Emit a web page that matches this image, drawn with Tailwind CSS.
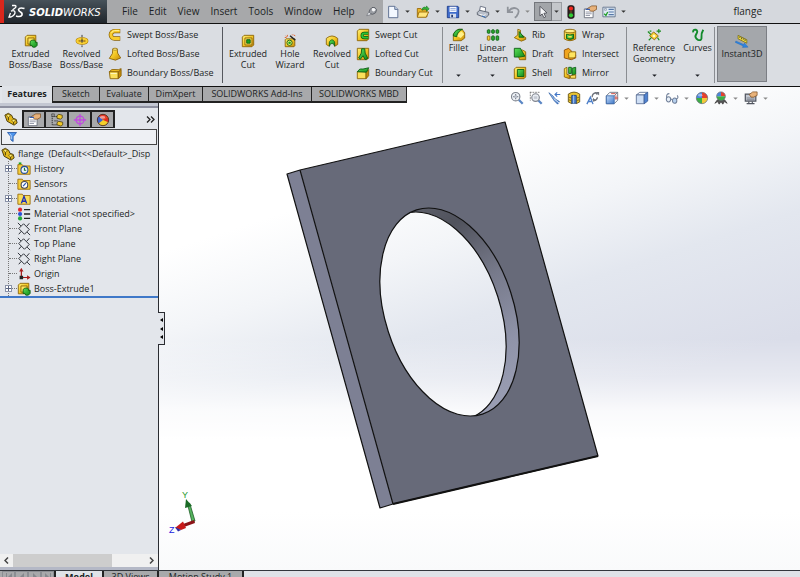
<!DOCTYPE html>
<html lang="en">
<head>
<meta charset="utf-8">
<meta name="viewport" content="width=device-width, initial-scale=1">
<title>SOLIDWORKS - flange</title>
<script src="https://cdn.jsdelivr.net/npm/@tailwindcss/browser@4"></script>
</head>
<body class="flex h-screen flex-col overflow-hidden bg-[#dadde2] font-['Open_Sans','Noto_Sans',sans-serif] text-[9px] leading-[11px] text-[#1c1f24]">

<svg class="absolute size-0" aria-hidden="true">
  <defs>
    <linearGradient id="gold" x1="0" y1="0" x2="1" y2="1"><stop offset="0" stop-color="#fff27a"/><stop offset=".5" stop-color="#f3c623"/><stop offset="1" stop-color="#c48a0a"/></linearGradient>
    <linearGradient id="blue" x1="0" y1="0" x2="1" y2="1"><stop offset="0" stop-color="#c6dcf8"/><stop offset="1" stop-color="#3f78c8"/></linearGradient>
    <linearGradient id="green" x1="0" y1="0" x2="1" y2="1"><stop offset="0" stop-color="#5de05a"/><stop offset="1" stop-color="#108a18"/></linearGradient>
  </defs>
  <symbol id="arrow" viewBox="0 0 6 4"><path d="M0 .5h6L3 3.5z" fill="currentColor"/></symbol>

  <symbol id="extrude" viewBox="0 0 16 16"><path d="M1.500 3.500l2-2h10v9l-2 3h-10z" fill="url(#gold)" stroke="#8a6206"/><path d="M4.500 4.500h7v7h-7z" fill="#ffe45e" stroke="#8a6206"/><path d="M7 8.500l2-1.500h3l1 1v1.500h2v3.500l-2 2h-3l-1-2H7z" fill="url(#green)" stroke="#0b5c12"/></symbol>
  <symbol id="revolve" viewBox="0 0 16 16"><path d="M8 1v14" stroke="#222" stroke-dasharray="3 1"/><ellipse cx="8" cy="8" rx="5.500" ry="2.400" fill="none" stroke="#a87808" stroke-width="3.600"/><ellipse cx="8" cy="8" rx="5.500" ry="2.400" fill="none" stroke="#f7cf34" stroke-width="2.400"/><path d="M8 5v5" stroke="#222"/></symbol>
  <symbol id="swept" viewBox="0 0 16 16"><path d="M14 3.500H7.500a4 4 0 0 0 0 8.500H14" fill="none" stroke="#8a6206" stroke-width="5"/><path d="M13.500 3.500H7.500a4 4 0 0 0 0 8.500h6" fill="none" stroke="#f8cc2c" stroke-width="3.400"/><path d="M13 2.800H7.500a4.500 4.500 0 0 0-3.500 3" fill="none" stroke="#fff3a0"/></symbol>
  <symbol id="loft" viewBox="0 0 16 16"><path d="M5.500 2h5l.5 5 3.500 5.500-6 2.500-7-2L5 7.500z" fill="url(#gold)" stroke="#8a6206"/><ellipse cx="8" cy="2.500" rx="2.500" ry="1.200" fill="#fff08a" stroke="#8a6206" stroke-width=".7"/></symbol>
  <symbol id="boundary" viewBox="0 0 16 16"><path d="M1.500 6.500h10v8h-9z" fill="#fbe05a" stroke="#8a6206"/><path d="M1.500 6.500Q4 3 8 4t7-1l-2.500 3.500z" fill="#f1bd1c" stroke="#8a6206"/><path d="M12 7l3-3v7l-3 3.500z" fill="#c48a0a" stroke="#8a6206"/><path d="M3 8.500h7" stroke="#fffbd0"/></symbol>
  <symbol id="extrudecut" viewBox="0 0 16 16"><path d="M1.500 3.500l2-2h11v11l-2 2h-11z" fill="url(#gold)" stroke="#8a6206"/><path d="M4.500 4.500h8v8h-8z" fill="#ffe45e" stroke="#8a6206"/><path d="M6.500 6.500h4v4h-4z" fill="#19a51f" stroke="#0b5c12"/></symbol>
  <symbol id="hole" viewBox="0 0 16 16"><path d="M2.500 6.500l1-1h10v8l-1 1h-10z" fill="url(#gold)" stroke="#8a6206"/><circle cx="7.500" cy="10" r="3" fill="#f4f07a" stroke="#0b5c12"/><circle cx="7.500" cy="10" r="1.500" fill="#19a51f"/><path d="M8 2l6 5" stroke="#222" stroke-width="1.600"/><path d="M3 2l1 1M5 1v2M2 4h2M12 1l2 1M10 1h1" stroke="#e0561a"/></symbol>
  <symbol id="revcut" viewBox="0 0 16 16"><path d="M1.500 5Q8-.5 14.500 5v7l-3.500 2v-4Q8 7 5 10v4l-3.500-2z" fill="url(#gold)" stroke="#8a6206"/><path d="M5 14V9q3-5 6 0v5L9.500 11h-3z" fill="url(#green)" stroke="#0b5c12" stroke-width=".8"/></symbol>
  <symbol id="sweptcut" viewBox="0 0 16 16"><path d="M1.500 3.500l2-2h11v11l-2 2h-11z" fill="url(#gold)" stroke="#8a6206"/><path d="M14 6H9.500a2.300 2.300 0 0 0 0 5H14" fill="none" stroke="#0b5c12" stroke-width="3.600"/><path d="M14 6H9.500a2.300 2.300 0 0 0 0 5H14" fill="none" stroke="#2ec334" stroke-width="2"/></symbol>
  <symbol id="loftcut" viewBox="0 0 16 16"><path d="M1.500 1.500h13v11l-2 2h-11z" fill="url(#gold)" stroke="#8a6206"/><path d="M6.500 2h3.500l.5 5 3 6-3 1.500L8 10l-3 4-2-1.500L6 7z" fill="url(#green)" stroke="#0b5c12"/></symbol>
  <symbol id="boundcut" viewBox="0 0 16 16"><path d="M1.500 6.500h10v8h-10z" fill="#fbe05a" stroke="#8a6206"/><path d="M11.500 7l3-3v7l-3 3.500z" fill="#c48a0a" stroke="#8a6206"/><path d="M1.500 6.500Q4 2 8 3.500l6.500-1.500-2.500 5z" fill="url(#green)" stroke="#0b5c12"/></symbol>
  <symbol id="fillet" viewBox="0 0 16 16"><path d="M1.500 7L7 1.500h4.500l3 4v6l-4 3h-9z" fill="url(#gold)" stroke="#8a6206"/><path d="M1.500 9Q2 3 8 1.500h4Q6 4 5.500 10z" fill="url(#green)" stroke="#0b5c12"/><path d="M6 9.500q1-4 5-5.500l3 3-4 4.500z" fill="#fff08a"/></symbol>
  <symbol id="pattern" viewBox="0 0 16 16"><g fill="#2cae30" stroke="#0b5c12"><rect x="1.500" y="2" width="3" height="4" rx="1"/><rect x="6.500" y="2" width="3" height="4" rx="1"/><rect x="11.500" y="2" width="3" height="4" rx="1"/><rect x="6.500" y="9" width="3" height="5" rx="1"/><rect x="11.500" y="9" width="3" height="5" rx="1"/></g><rect x="1.500" y="9" width="3" height="5" rx="1" fill="#f7cf34" stroke="#8a6206"/></symbol>
  <symbol id="rib" viewBox="0 0 16 16"><path d="M1.500 11l4-3V1.500l3 1V7l6 4v2l-5 2z" fill="url(#gold)" stroke="#8a6206"/><path d="M7 4l5.500 6.500H7z" fill="url(#green)" stroke="#0b5c12"/></symbol>
  <symbol id="draft" viewBox="0 0 16 16"><path d="M4.500 5L11 3.500l3.500 2v9h-7z" fill="url(#gold)" stroke="#8a6206"/><path d="M1.500 1.500h7l5 9-6 1h-6z" fill="url(#green)" stroke="#0b5c12"/></symbol>
  <symbol id="shell" viewBox="0 0 16 16"><path d="M1.500 3.500l2-2h11v11l-2 2h-11z" fill="url(#gold)" stroke="#8a6206"/><path d="M5 4h7.500v8H5z" fill="url(#green)" stroke="#0b5c12"/></symbol>
  <symbol id="wrap" viewBox="0 0 16 16"><path d="M1.500 3.500v9q6.500 4 13 0v-9z" fill="url(#gold)" stroke="#8a6206"/><ellipse cx="8" cy="3.500" rx="6.500" ry="2" fill="#fff08a" stroke="#8a6206"/><path d="M4 7q4 2 8 0v5q-4 2-8 0z" fill="url(#green)" stroke="#0b5c12"/><path d="M6 9h4v2H6z" fill="#f7e04a"/></symbol>
  <symbol id="intersect" viewBox="0 0 16 16"><path d="M1.500 3.500l5-2 3 3v4l5 1v3l-5 2-8-2z" fill="#f0a51e" stroke="#8a4a06"/><path d="M6.500 7.500l2-2h6v5l-2 2h-6z" fill="#ffe45e" stroke="#8a6206"/></symbol>
  <symbol id="mirror" viewBox="0 0 16 16"><path d="M1.500 3l3-1.500v8l3 1v4l-6-2z" fill="url(#gold)" stroke="#8a6206"/><path d="M6.500 1.500h3v7h-3zM10.500 2.500l4-1v8l-4 1z" fill="url(#green)" stroke="#0b5c12"/><path d="M8.500 11l6-1v4h-6z" fill="#fbe05a" stroke="#8a6206"/></symbol>
  <symbol id="refgeo" viewBox="0 0 16 16"><path d="M3 9l4.500-4.500L13 9l-4.500 4.500z" fill="#f7cf34" stroke="#8a6206"/><path d="M1 4l3.500 3.500M12 11l2 3M2 14l3-3M13.500 1v5M11 3.500h5M3 3.500h2" stroke="#1a8c1e" stroke-width="1.300"/><path d="M6 9l2-2 2 2-2 2z" fill="#fffbd0"/></symbol>
  <symbol id="curves" viewBox="0 0 16 16"><path d="M2.500 5q-.5-3.500 3-3 3 1 .5 5t2 6.500q4.500 1.500 4-3t2-8.500" fill="none" stroke="#138a2c" stroke-width="2.200"/></symbol>
  <symbol id="instant" viewBox="0 0 16 16"><path d="M3.500 1.500l10 5v4l-10-5z" fill="#f3dd3e" stroke="#6e6408" stroke-width=".8"/><path d="M5.500 3v1.500M7.500 4v2M9.500 5v1.500M11.500 6v2" stroke="#444"/><path d="M1 8l9 4 .8-1.800L15 15l-6.500.300.800-1.700L.3 9.600z" fill="#2f86e0" stroke="#1a5cb0" stroke-width=".4"/></symbol>

  <symbol id="pin" viewBox="0 0 16 16"><path d="M8 2q5-1 6 3 0 5-5 6-4 0-5-3 1-4 4-6z" fill="#9a9da3" stroke="#4a4d55"/><path d="M8 3q4-1 5 2-2 3-4 2-2-1-1-4z" fill="#f4f5f7"/><path d="M4 8q-2 2-3 5 4-1 6-2z" fill="#dfe1e6" stroke="#5a5d65" stroke-width=".7"/></symbol>
  <symbol id="new" viewBox="0 0 16 16"><path d="M3 1.500h7l3.500 3.500v9.500H3z" fill="#f3f8ff" stroke="#506488"/><path d="M10 1.500V5h3.500" fill="#c9d9ee" stroke="#506488"/></symbol>
  <symbol id="open" viewBox="0 0 16 16"><path d="M1.500 4h4l1 1.500h6v8h-11z" fill="#e9b52a" stroke="#9a6a08"/><path d="M3.500 8h11l-3 6h-10z" fill="#ffe57c" stroke="#9a6a08"/><path d="M7 4q2-3 5-1V1l3 3.500L12 7V5Q9 4 7 6z" fill="#35b93a" stroke="#0d6b16" stroke-width=".6"/></symbol>
  <symbol id="save" viewBox="0 0 16 16"><path d="M1.500 1.500h12l1 1v12h-13z" fill="#3f6ccc" stroke="#1c3a88"/><path d="M4 2h8v6H4z" fill="#f4f7fd"/><path d="M5 4h6M5 6h6" stroke="#8da5d8"/><path d="M4.500 10h7v4.500h-7z" fill="#d4dcec"/><path d="M6 11h2v3H6z" fill="#22396f"/></symbol>
  <symbol id="print" viewBox="0 0 16 16"><path d="M4 7l1-5.500 6 1.500-.5 5" fill="#fff" stroke="#60687a"/><path d="M1.500 8.500L4 6l10.500 2.500v3L11 14.500 1.500 11z" fill="#b9bfca" stroke="#555b68"/><path d="M4 10.500l5 1.500 2-1.500" fill="none" stroke="#fff"/><path d="M7 12.500l4 1.500" stroke="#2c72c8"/></symbol>
  <symbol id="undo" viewBox="0 0 16 16"><path d="M2 2v6h6M3 7q4-5 9-3t0 9l-2 1.500" fill="none" stroke="#8f939a" stroke-width="2"/></symbol>
  <symbol id="cursor" viewBox="0 0 16 16"><path d="M4.500 1.500v11l2.500-2.300 2 4.300 2-1-2-4 3.500-.5z" fill="#f5f6f8" stroke="#4a4d55"/></symbol>
  <symbol id="light" viewBox="0 0 16 16"><rect x="4.500" y=".8" width="7" height="14.400" rx="2" fill="#2e2222" stroke="#181010"/><circle cx="8" cy="4" r="2.400" fill="#f02a22"/><circle cx="8" cy="8" r="1.200" fill="#5e4a20"/><circle cx="8" cy="11.800" r="2.400" fill="#2ecb34"/></symbol>
  <symbol id="props" viewBox="0 0 16 16"><path d="M1.500 4.500h10v10h-10z" fill="#fff" stroke="#666b78"/><path d="M3 8h7M3 10h7M3 12h5" stroke="#8b90a0"/><path d="M5 4l5-3h5.500v4L12 7H9z" fill="#e8b27a" stroke="#7a4a1c" stroke-width=".8"/><path d="M3 5h5" stroke="#3a5fae" stroke-width="1.500"/></symbol>
  <symbol id="options" viewBox="0 0 16 16"><path d="M1 2.500h14v11H1z" fill="#dfeaf5" stroke="#607088"/><path d="M7.500 5h6M7.500 8h6M7.500 11h6" stroke="#5577a8" stroke-width="1.300"/><path d="M3 4h2v2H3z" fill="#fff" stroke="#607088" stroke-width=".6"/><path d="M2.500 10l2 2 2-4" fill="none" stroke="#1c9d24" stroke-width="1.500"/></symbol>

  <symbol id="zoomfit" viewBox="0 0 16 16"><path d="M10 10l4.500 4.500" stroke="#5a86c4" stroke-width="2.600"/><circle cx="6.500" cy="6.500" r="4.800" fill="#eef2f7" stroke="#7d838d" stroke-width="1.300"/><path d="M6.500 3.500v6M3.500 6.500h6" stroke="#70767f" stroke-width="1.200"/><path d="M5 5h3v3H5z" fill="#b9bfca"/></symbol>
  <symbol id="zoomarea" viewBox="0 0 16 16"><path d="M1 1.500h11M1.500 1v10" stroke="#777" stroke-dasharray="2 1"/><path d="M10.500 10.500l4 4" stroke="#5a86c4" stroke-width="2.600"/><circle cx="7.500" cy="7.500" r="4.300" fill="#e9edf3" stroke="#80858e" stroke-width="1.300"/><path d="M5.500 6h4v3h-4z" fill="#c5cad3"/></symbol>
  <symbol id="prev" viewBox="0 0 16 16"><path d="M1 2l5 4 2 3 5 3-2 3-4-4-2-3z" fill="url(#blue)" stroke="#3565a8" stroke-width=".9"/><path d="M8 4h6M10.500 1.500L8 4l2.500 2.500" fill="none" stroke="#4478c8" stroke-width="1.300"/><path d="M7 9l6 5" stroke="#e8f0fb"/></symbol>
  <symbol id="section" viewBox="0 0 16 16"><path d="M1.500 3.500Q8-1 14.500 3.500v9l-4 2v-9h-5v9l-4-2z" fill="#e9c332" stroke="#665212"/><path d="M5.500 5h5v9h-5z" fill="#4f82cc" stroke="#264a88"/><path d="M7.500 5v9" stroke="#a9c8f2"/><path d="M2 7l3 1M2 10l3 1M11 8l3-1M11 11l3-1" stroke="#7d6612"/></symbol>
  <symbol id="orient" viewBox="0 0 16 16"><path d="M1 15l4-8 3 8M2.500 12h4" fill="none" stroke="#4d7fc8" stroke-width="1.500"/><path d="M7 7q0-4 4-5l2 2M13 7q0 3-4 4l-1-2" fill="none" stroke="#6d727b" stroke-width="1.500"/><path d="M11 1h4v4zM8 12V8l4 3z" fill="#6d727b"/></symbol>
  <symbol id="viewcube" viewBox="0 0 16 16"><path d="M1.500 5.500l4-4h9v9l-4 4h-9z" fill="#f5f7fa" stroke="#6a717e"/><path d="M1.500 5.500h9v9h-9z" fill="url(#blue)" stroke="#3a69ac"/><path d="M10.500 5.500l4-4" stroke="#6a717e"/><path d="M7 3h5M12.500 5v5M11 8h4" stroke="#d04438"/></symbol>
  <symbol id="display" viewBox="0 0 16 16"><path d="M1.500 4.500l4-3h9l-4 3z" fill="#fff" stroke="#5a6f96"/><path d="M1.500 4.500h9v10h-9z" fill="#cfdff5" stroke="#5a6f96"/><path d="M10.500 4.500l4-3v10l-4 3z" fill="#4f82d0" stroke="#3a5f9c"/></symbol>
  <symbol id="glasses" viewBox="0 0 16 16"><ellipse cx="4" cy="9.500" rx="2.500" ry="3" fill="#e9f0f8" stroke="#72819a" stroke-width="1.200"/><ellipse cx="11" cy="11" rx="2.500" ry="3" fill="#b6d0ee" stroke="#72819a" stroke-width="1.200"/><path d="M6.500 9l2 1M2 8q-1-5 3-5M13 9q3-1 1-4" fill="none" stroke="#72819a" stroke-width="1.200"/></symbol>
  <symbol id="ball" viewBox="0 0 16 16"><path d="M8 8V1.500A6.500 6.500 0 0 1 14.500 8z" fill="#e6402c"/><path d="M8 8h6.500A6.500 6.500 0 0 1 8 14.500z" fill="#f3c93a"/><path d="M8 8v6.500A6.500 6.500 0 0 1 1.500 8z" fill="#3dae45"/><path d="M8 8H1.500A6.500 6.500 0 0 1 8 1.500z" fill="#4a86dc"/><circle cx="8" cy="8" r="6.500" fill="none" stroke="#666b75" stroke-width=".8"/><ellipse cx="6" cy="4.800" rx="2.500" ry="1.600" fill="#fff" opacity=".45"/></symbol>
  <symbol id="scene" viewBox="0 0 16 16"><path d="M1 14l3-4h8l3 4-3-2-2 3-2-3-2 3-2-3z" fill="#555" stroke="#444"/><path d="M8 6V1a5 5 0 0 1 5 5z" fill="#e6402c"/><path d="M8 6h5a5 5 0 0 1-5 5z" fill="#3dae45"/><path d="M8 6v5a5 5 0 0 1-5-5z" fill="#3dae45"/><path d="M8 6H3a5 5 0 0 1 5-5z" fill="#4a86dc"/><circle cx="8" cy="6" r="5" fill="none" stroke="#666b75" stroke-width=".8"/></symbol>
  <symbol id="monitor" viewBox="0 0 16 16"><path d="M1.500 3.500h12v8h-12z" fill="#c4c9d2" stroke="#50555f" stroke-width="1.400"/><path d="M3 8h9M3 10h9" stroke="#767c88"/><path d="M5.500 12v2M9.500 12v2M3 14.500h9" stroke="#50555f" stroke-width="1.300"/><path d="M6 4l4-3h5v4l-4 2H8z" fill="#e8b27a" stroke="#7a4a1c" stroke-width=".8"/></symbol>

  <symbol id="part" viewBox="0 0 16 16"><path d="M1 3.500L5 1.500 9 4l1 3 4 1.500 1 4-3.500 2.500-8-4.500z" fill="#e3b91c" stroke="#3c2e04"/><path d="M2.500 3.800L5 2.800l2.500 1.500L5 6zM8.500 9.500l2.500-1 2.500 1.300-2.500 1.700z" fill="#fff27a" stroke="#6b5208" stroke-width=".7"/><path d="M5 6v3.500M11 11.500V14" stroke="#3c2e04"/></symbol>
  <symbol id="config" viewBox="0 0 16 16"><path d="M2.500 1v12.500h6M2.500 4h6M5 9h4" fill="none" stroke="#222" stroke-dasharray="1.500 .8"/><path d="M2 1h3v3H2z" fill="#999" stroke="#333" stroke-width=".6"/><g fill="#f0c92a" stroke="#3c2e04" stroke-width=".8"><path d="M8 3l2-1.500 4 1v3l-2 1.500-4-1zM8 11l2-1.500 4.500 1v3L12.500 15 8 13.500z"/></g></symbol>
  <symbol id="target" viewBox="0 0 16 16"><circle cx="8" cy="8" r="4.500" fill="none" stroke="#c14be0" stroke-width="1.500"/><path d="M8 1v14M1 8h14" stroke="#c14be0" stroke-width="1.500"/></symbol>
  <symbol id="appear" viewBox="0 0 16 16"><circle cx="8" cy="8" r="6.500" fill="#f4cf2a"/><path d="M8 8L3 3.500A6.500 6.500 0 0 1 13.500 4.500z" fill="#e9392a"/><path d="M8 8L3 3.500a6.500 6.500 0 0 0 0 8.500z" fill="#3c62d0"/><path d="M8 8l5.500-3.500a6.500 6.500 0 0 1 .5 6z" fill="#e22c20"/><circle cx="8" cy="8" r="6.500" fill="none" stroke="#4c2c20"/><ellipse cx="7.500" cy="5" rx="3" ry="1.500" fill="#fff" opacity=".5"/></symbol>
  <symbol id="funnel" viewBox="0 0 16 16"><path d="M2 2h12l-4.500 5.500V14L6.500 12V7.500z" fill="#4d94ec" stroke="#1c4fa0"/><path d="M5 3.500l2.500 3.500v4" stroke="#d5e8ff" fill="none"/></symbol>
  <symbol id="f-history" viewBox="0 0 16 16"><path d="M1 3h5l1 1.500h8V14H1z" fill="#f5cf3c" stroke="#9a6a08"/><circle cx="8.500" cy="9" r="4" fill="#e9f2ff" stroke="#234c98" stroke-width="1.200"/><path d="M8.500 6.500V9.500h2" fill="none" stroke="#1c7a28" stroke-width="1.200"/><path d="M2 1.500h3" stroke="#19a51f" stroke-width="2"/></symbol>
  <symbol id="f-sensor" viewBox="0 0 16 16"><path d="M1 2.500h5l1 1.500h8v10H1z" fill="#f5cf3c" stroke="#9a6a08"/><circle cx="8.500" cy="9" r="3.800" fill="#fff" stroke="#445" stroke-width="1.200"/><path d="M7 10.500l3-3.500" stroke="#2859b0" stroke-width="1.500"/></symbol>
  <symbol id="f-annot" viewBox="0 0 16 16"><path d="M1 2.500h5l1 1.500h8v10H1z" fill="#f7db5a" stroke="#9a6a08"/><path d="M5 13l3-8 3 8M6 10.500h4" fill="none" stroke="#1c2fb8" stroke-width="1.600"/></symbol>
  <symbol id="material" viewBox="0 0 16 16"><circle cx="3.500" cy="3" r="2.400" fill="#e0262c"/><circle cx="3.500" cy="8" r="2.400" fill="#2a50d8"/><circle cx="3.500" cy="13" r="2.400" fill="#22a83c"/><path d="M8 3h7M8 8h7M8 13h7" stroke="#222" stroke-width="1.500"/></symbol>
  <symbol id="plane" viewBox="0 0 16 16"><path d="M7.500 2L14 8.500 8.500 14 2 7.500zM1 1l3.500 3.500M11.500 11.500L15 15M11 5l3-3.500M2 14l3-3.500" fill="none" stroke="#2c2f36" stroke-width="1.100"/></symbol>
  <symbol id="origin" viewBox="0 0 16 16"><path d="M5 12V2M5 12h9" stroke="#a81c1c" stroke-width="1.400"/><path d="M2.500 5L5 1l2.500 4zM11.500 9.500l4 2.500-4 2.500z" fill="#a81c1c"/><path d="M3 10h4v4H3z" fill="#222"/></symbol>
</svg>

<!-- title bar -->
<header class="flex h-6 shrink-0 items-stretch border-b border-[#111] bg-[#d5d8dd]">
  <div class="flex w-[107px] shrink-0 items-center gap-[3px] border-l-4 border-[#d9271c] bg-linear-to-b from-[#47525a] to-[#20262c] pl-1 text-white">
    <svg class="h-[15px] w-[18px] shrink-0" viewBox="0 0 18 15" fill="none" stroke="#fff" stroke-width="1.300"><path d="M4 1.500h3Q9 2 7 4L4.500 6M3 7q4-1 4 1.500T3 13H1l1.500-4"/><path d="M16.500 4.500q-5-1.500-6 1 0 1.500 2 2.500t1.500 3q-1.500 2.500-6 1" stroke-width="1.600"/></svg>
    <span class="pt-px font-['DejaVu_Sans',sans-serif] text-[10px] italic"><b>SOLID</b>WORKS</span>
  </div>
  <div class="flex shrink-0 items-center bg-[#a7a8aa]">
    <nav class="flex items-center gap-[11px] pl-[15px] text-[10px]" aria-label="Main menu">
      <button>File</button><button>Edit</button><button>View</button><button>Insert</button><button>Tools</button><button>Window</button><button>Help</button>
    </nav>
    <button class="ml-2.5 mr-1 grid size-3.5 place-items-center" aria-label="Pin menu"><svg class="size-3"><use href="#pin"/></svg></button>
  </div>
  <div class="flex items-center pl-px text-[#333]">
    <button class="grid w-[18px] place-items-center" aria-label="New"><svg class="size-3.5"><use href="#new"/></svg></button>
    <button class="grid w-3 place-items-center" aria-label="New options"><svg class="h-[3px] w-[5px]"><use href="#arrow"/></svg></button>
    <button class="grid w-[18px] place-items-center" aria-label="Open"><svg class="size-3.5"><use href="#open"/></svg></button>
    <button class="grid w-3 place-items-center" aria-label="Open options"><svg class="h-[3px] w-[5px]"><use href="#arrow"/></svg></button>
    <button class="grid w-[18px] place-items-center" aria-label="Save"><svg class="size-3.5"><use href="#save"/></svg></button>
    <button class="grid w-3 place-items-center" aria-label="Save options"><svg class="h-[3px] w-[5px]"><use href="#arrow"/></svg></button>
    <button class="grid w-[18px] place-items-center" aria-label="Print"><svg class="size-3.5"><use href="#print"/></svg></button>
    <button class="grid w-3 place-items-center" aria-label="Print options"><svg class="h-[3px] w-[5px]"><use href="#arrow"/></svg></button>
    <button class="grid w-[18px] place-items-center" aria-label="Undo"><svg class="size-3.5"><use href="#undo"/></svg></button>
    <button class="grid w-3 place-items-center text-[#888]" aria-label="Undo options"><svg class="h-[3px] w-[5px]"><use href="#arrow"/></svg></button>
    <button class="grid h-[19px] w-[18px] place-items-center border border-[#74777c] bg-[#a2a5a9]" aria-label="Select"><svg class="size-3.5"><use href="#cursor"/></svg></button>
    <button class="grid h-[19px] w-2.5 place-items-center border border-l-0 border-[#9a9da2] bg-[#c4c7cb]" aria-label="Select options"><svg class="h-[3px] w-[5px]"><use href="#arrow"/></svg></button>
    <button class="grid w-[19px] place-items-center" aria-label="Rebuild"><svg class="size-3.5"><use href="#light"/></svg></button>
    <button class="grid w-[19px] place-items-center" aria-label="File properties"><svg class="size-3.5"><use href="#props"/></svg></button>
    <button class="grid w-[19px] place-items-center" aria-label="Options"><svg class="size-3.5"><use href="#options"/></svg></button>
    <button class="grid w-2.5 place-items-center" aria-label="More options"><svg class="h-[3px] w-[5px]"><use href="#arrow"/></svg></button>
  </div>
  <h1 class="ml-auto self-center pr-[38px] text-[10px]">flange</h1>
</header>

<!-- ribbon -->
<section class="flex h-[63px] shrink-0 border-b border-[#111] bg-[#dadde2] pl-[5px]" aria-label="Features ribbon">
  <button class="flex w-[51px] shrink-0 flex-col items-center pt-2.5"><svg class="size-3.5 shrink-0"><use href="#extrude"/></svg>Extruded<br>Boss/Base</button>
  <button class="flex w-[51px] shrink-0 flex-col items-center pt-2.5"><svg class="size-3.5 shrink-0"><use href="#revolve"/></svg>Revolved<br>Boss/Base</button>
  <div class="flex w-[115px] shrink-0 flex-col pl-px pt-px">
    <button class="flex h-[19px] items-center gap-[5px]"><svg class="size-3.5"><use href="#swept"/></svg>Swept Boss/Base</button>
    <button class="flex h-[19px] items-center gap-[5px]"><svg class="size-3.5"><use href="#loft"/></svg>Lofted Boss/Base</button>
    <button class="flex h-[19px] items-center gap-[5px]"><svg class="size-3.5"><use href="#boundary"/></svg>Boundary Boss/Base</button>
  </div>
  <div class="my-[3px] mr-1 w-px shrink-0 bg-[#55585e]"></div>
  <button class="flex w-[42px] shrink-0 flex-col items-center pt-2.5"><svg class="size-3.5 shrink-0"><use href="#extrudecut"/></svg>Extruded<br>Cut</button>
  <button class="flex w-[42px] shrink-0 flex-col items-center pt-2.5"><svg class="size-3.5 shrink-0"><use href="#hole"/></svg>Hole<br>Wizard</button>
  <button class="flex w-[42px] shrink-0 flex-col items-center pt-2.5"><svg class="size-3.5 shrink-0"><use href="#revcut"/></svg>Revolved<br>Cut</button>
  <div class="flex w-[89px] shrink-0 flex-col pl-[3px] pt-px">
    <button class="flex h-[19px] items-center gap-[5px]"><svg class="size-3.5"><use href="#sweptcut"/></svg>Swept Cut</button>
    <button class="flex h-[19px] items-center gap-[5px]"><svg class="size-3.5"><use href="#loftcut"/></svg>Lofted Cut</button>
    <button class="flex h-[19px] items-center gap-[5px]"><svg class="size-3.5"><use href="#boundcut"/></svg>Boundary Cut</button>
  </div>
  <div class="my-[3px] w-px shrink-0 bg-[#8a8d92]"></div>
  <button class="flex w-[31px] shrink-0 flex-col items-center pb-[9px] pt-1"><svg class="size-3.5 shrink-0"><use href="#fillet"/></svg>Fillet<svg class="mt-auto h-[3px] w-[5px]"><use href="#arrow"/></svg></button>
  <button class="flex w-[37px] shrink-0 flex-col items-center pb-[9px] pt-1"><svg class="size-3.5 shrink-0"><use href="#pattern"/></svg>Linear<br>Pattern<svg class="mt-auto h-[3px] w-[5px]"><use href="#arrow"/></svg></button>
  <div class="flex w-[51px] shrink-0 flex-col pl-0.5 pt-px">
    <button class="flex h-[19px] items-center gap-[5px]"><svg class="size-3.5"><use href="#rib"/></svg>Rib</button>
    <button class="flex h-[19px] items-center gap-[5px]"><svg class="size-3.5"><use href="#draft"/></svg>Draft</button>
    <button class="flex h-[19px] items-center gap-[5px]"><svg class="size-3.5"><use href="#shell"/></svg>Shell</button>
  </div>
  <div class="flex w-[64px] shrink-0 flex-col pl-px pt-px">
    <button class="flex h-[19px] items-center gap-[5px]"><svg class="size-3.5"><use href="#wrap"/></svg>Wrap</button>
    <button class="flex h-[19px] items-center gap-[5px]"><svg class="size-3.5"><use href="#intersect"/></svg>Intersect</button>
    <button class="flex h-[19px] items-center gap-[5px]"><svg class="size-3.5"><use href="#mirror"/></svg>Mirror</button>
  </div>
  <div class="my-[3px] w-px shrink-0 bg-[#8a8d92]"></div>
  <button class="flex w-[54px] shrink-0 flex-col items-center pb-[9px] pt-1"><svg class="size-3.5 shrink-0"><use href="#refgeo"/></svg>Reference<br>Geometry<svg class="mt-auto h-[3px] w-[5px]"><use href="#arrow"/></svg></button>
  <button class="flex w-[33px] shrink-0 flex-col items-center pb-[9px] pt-1"><svg class="size-3.5 shrink-0"><use href="#curves"/></svg>Curves<svg class="mt-auto h-[3px] w-[5px]"><use href="#arrow"/></svg></button>
  <div class="my-[3px] mr-0.5 w-px shrink-0 bg-[#8a8d92]"></div>
  <button class="mb-1 mt-0.5 flex w-[50px] shrink-0 flex-col items-center border border-[#7b7e84] bg-[#a4a7ab] pt-[7px]"><svg class="size-3.5 shrink-0"><use href="#instant"/></svg>Instant3D</button>
</section>

<main class="relative flex min-h-0 flex-1">
  <!-- ribbon tabs, lying over the viewport -->
  <nav class="absolute left-0 top-0 z-10 flex h-4 border-r border-[#222] pl-0.5 text-center" aria-label="Ribbon tabs">
    <button class="-mt-px w-[50px] bg-[#dfe2e7] pb-0.5 font-bold">Features</button>
    <button class="w-[47px] border-b-2 border-l border-[#222] bg-[#a8a9ab] pb-0.5">Sketch</button>
    <button class="w-[49px] border-b-2 border-l border-[#222] bg-[#a8a9ab] pb-0.5">Evaluate</button>
    <button class="w-[54px] border-b-2 border-l border-[#222] bg-[#a8a9ab] pb-0.5">DimXpert</button>
    <button class="w-[109px] border-b-2 border-l border-[#222] bg-[#a8a9ab] pb-0.5">SOLIDWORKS Add-Ins</button>
    <button class="w-[95px] border-b-2 border-l border-[#222] bg-[#a8a9ab] pb-0.5">SOLIDWORKS MBD</button>
  </nav>

  <!-- feature manager -->
  <aside class="flex w-[159px] shrink-0 flex-col border-r border-[#2a2c31] bg-[#e3e6eb] pt-4">
    <div class="h-[5px] shrink-0 border-b-2 border-[#8d90a0] bg-[#c3c7d2]"></div>
    <div class="flex h-5 shrink-0 items-end">
      <button class="grid h-[19px] w-[22px] place-items-center" aria-label="Feature tree"><svg class="size-3.5"><use href="#part"/></svg></button>
      <button class="grid h-[18px] w-6 place-items-center border-2 border-b border-[#222] bg-[#a8a9ab]" aria-label="Properties"><svg class="size-3.5"><use href="#props"/></svg></button>
      <button class="grid h-[18px] w-[23px] place-items-center border-2 border-b border-l-0 border-[#222] bg-[#a8a9ab]" aria-label="Configurations"><svg class="size-3.5"><use href="#config"/></svg></button>
      <button class="grid h-[18px] w-[23px] place-items-center border-2 border-b border-l-0 border-[#222] bg-[#a8a9ab]" aria-label="DimXpert manager"><svg class="size-3.5"><use href="#target"/></svg></button>
      <button class="grid h-[18px] w-[23px] place-items-center border-2 border-b border-l-0 border-[#222] bg-[#a8a9ab]" aria-label="Display manager"><svg class="size-3.5"><use href="#appear"/></svg></button>
      <button class="ml-auto mr-0.5 grid h-[18px] w-3 place-items-center" aria-label="More tabs"><svg class="h-[7px] w-[9px]" viewBox="0 0 9 7" fill="none" stroke="#222" stroke-width="1.300"><path d="M1 .5l3 3-3 3M5 .5l3 3-3 3"/></svg></button>
    </div>
    <label class="mx-px mt-px flex h-4 shrink-0 items-center border border-[#444] bg-[#eef0f4] pl-1">
      <svg class="size-3"><use href="#funnel"/></svg><input class="min-w-0 flex-1 bg-transparent pl-1 outline-none" type="text" aria-label="Filter tree">
    </label>
    <ul class="mt-px whitespace-nowrap border-b-2 border-[#3f78c8] pl-px">
      <li class="flex h-[15px] items-center gap-[3px]"><svg class="size-3.5 shrink-0"><use href="#part"/></svg><span class="whitespace-pre">flange  (Default&lt;&lt;Default&gt;_Disp</span></li>
      <li>
        <ul class="ml-[7px] border-l border-dotted border-[#777]">
          <li class="flex h-[15px] items-center"><button class="-ml-1 grid size-[7px] place-items-center border border-[#8a93a8] bg-white" aria-label="Expand History"><svg class="size-[5px]" viewBox="0 0 5 5"><path d="M0 2.500h5M2.500 0v5" stroke="#5a6480"/></svg></button><span class="w-[5px] border-t border-dotted border-[#777]"></span><svg class="mr-[3px] size-3.5"><use href="#f-history"/></svg>History</li>
          <li class="flex h-[15px] items-center"><span class="w-2 border-t border-dotted border-[#777]"></span><svg class="mr-[3px] size-3.5"><use href="#f-sensor"/></svg>Sensors</li>
          <li class="flex h-[15px] items-center"><button class="-ml-1 grid size-[7px] place-items-center border border-[#8a93a8] bg-white" aria-label="Expand Annotations"><svg class="size-[5px]" viewBox="0 0 5 5"><path d="M0 2.500h5M2.500 0v5" stroke="#5a6480"/></svg></button><span class="w-[5px] border-t border-dotted border-[#777]"></span><svg class="mr-[3px] size-3.5"><use href="#f-annot"/></svg>Annotations</li>
          <li class="flex h-[15px] items-center"><span class="w-2 border-t border-dotted border-[#777]"></span><svg class="mr-[3px] size-3.5"><use href="#material"/></svg>Material &lt;not specified&gt;</li>
          <li class="flex h-[15px] items-center"><span class="w-2 border-t border-dotted border-[#777]"></span><svg class="mr-[3px] size-3.5"><use href="#plane"/></svg>Front Plane</li>
          <li class="flex h-[15px] items-center"><span class="w-2 border-t border-dotted border-[#777]"></span><svg class="mr-[3px] size-3.5"><use href="#plane"/></svg>Top Plane</li>
          <li class="flex h-[15px] items-center"><span class="w-2 border-t border-dotted border-[#777]"></span><svg class="mr-[3px] size-3.5"><use href="#plane"/></svg>Right Plane</li>
          <li class="flex h-[15px] items-center"><span class="w-2 border-t border-dotted border-[#777]"></span><svg class="mr-[3px] size-3.5"><use href="#origin"/></svg>Origin</li>
          <li class="flex h-[15px] items-center"><button class="-ml-1 grid size-[7px] place-items-center border border-[#8a93a8] bg-white" aria-label="Expand Boss-Extrude1"><svg class="size-[5px]" viewBox="0 0 5 5"><path d="M0 2.500h5M2.500 0v5" stroke="#5a6480"/></svg></button><span class="w-[5px] border-t border-dotted border-[#777]"></span><svg class="mr-[3px] size-3.5"><use href="#extrude"/></svg>Boss-Extrude1</li>
        </ul>
      </li>
    </ul>
    <div class="mt-auto flex h-[13px] shrink-0 items-stretch bg-[#f0f0f0]">
      <button class="grid w-[13px] place-items-center" aria-label="Scroll left"><svg class="h-[7px] w-[5px]" viewBox="0 0 5 7" fill="none" stroke="#444" stroke-width="1.500"><path d="M4 .5l-3 3 3 3"/></svg></button>
      <div class="flex-1"><div class="h-full w-3/4 bg-[#cdcdcd]"></div></div>
      <button class="grid w-[13px] place-items-center" aria-label="Scroll right"><svg class="h-[7px] w-[5px]" viewBox="0 0 5 7" fill="none" stroke="#444" stroke-width="1.500"><path d="M1 .5l3 3-3 3"/></svg></button>
    </div>
    <div class="h-[3px] shrink-0 bg-[#b4b8c6]"></div>
  </aside>

  <!-- graphics area -->
  <section class="relative min-w-0 flex-1 bg-white" aria-label="Graphics area">
    <div class="absolute inset-0 bg-[linear-gradient(162deg,#ffffff_24%,#f3f5f8_36%,#e3e7ef_48%,#dadde9_66%)]"></div>
    <div class="absolute inset-0 bg-[linear-gradient(180deg,transparent_52%,rgba(255,255,255,0.35)_60%,rgba(255,255,255,0.85)_67%,#ffffff_73%,#ffffff_88%,#f9fafb_100%)]"></div>
    <svg class="absolute inset-0 size-full" viewBox="159 87 641 483" role="img" aria-label="Flange plate with a circular hole">
      <defs>
        <clipPath id="front"><ellipse cx="449.500" cy="312" rx="64.300" ry="107.300" transform="rotate(-17.900 449.500 312)"/></clipPath>
        <mask id="bore" maskUnits="userSpaceOnUse" x="159" y="87" width="641" height="483"><rect x="159" y="87" width="641" height="483" fill="#fff"/><g clip-path="url(#front)"><ellipse cx="436.500" cy="316" rx="64.300" ry="107.300" transform="rotate(-17.900 436.500 316)" fill="#000"/></g></mask>
        <linearGradient id="wall" gradientUnits="userSpaceOnUse" x1="430" y1="208" x2="480" y2="416"><stop offset="0" stop-color="#5c5e69"/><stop offset=".15" stop-color="#50525c"/><stop offset=".45" stop-color="#777a8b"/><stop offset=".75" stop-color="#8f93a8"/><stop offset="1" stop-color="#9a9eb4"/></linearGradient>
      </defs>
      <g mask="url(#bore)">
        <path d="M287 174l13-4 93 334-13 4z" fill="#7d8094"/>
        <path d="M300 170l205-48 93 334-205 48z" fill="#676a79"/>
        <ellipse cx="449.500" cy="312" rx="64.300" ry="107.300" transform="rotate(-17.900 449.500 312)" fill="url(#wall)"/>
      </g>
      <path d="M287 174l13-4 205-48 93 334-205 48-13 4zM300 170l93 334" fill="none" stroke="#111" stroke-width="1.200" stroke-linejoin="round"/>
      <path d="M393 504l205-48" stroke="#111" stroke-width="2"/>
      <ellipse cx="449.500" cy="312" rx="64.300" ry="107.300" transform="rotate(-17.900 449.500 312)" fill="none" stroke="#111" stroke-width="1.200"/>
      <g clip-path="url(#front)"><ellipse cx="436.500" cy="316" rx="64.300" ry="107.300" transform="rotate(-17.900 436.500 316)" fill="none" stroke="#111" stroke-width="1.200"/></g>
      <!-- axis triad -->
      <path d="M192 522l-4.500-18 2.200-.8L195 521z" fill="#56b45e" stroke="#1c5c26" stroke-width=".8"/>
      <path d="M186 499l-1 9 7-2z" fill="#1a6a26"/>
      <path d="M194 520l1 3-11 4-1-3z" fill="#8c1418"/>
      <path d="M175 528l8-6.500 3 6.500-5 2z" fill="#c81a1a"/>
      <path d="M175 527l6 3-3 1.500z" fill="#2a2aa8"/>
      <text x="182" y="498" font-size="9" fill="#1f9a2c" font-family="Liberation Sans, sans-serif">Y</text>
      <text x="169" y="533" font-size="9" fill="#2020e0" font-family="Liberation Sans, sans-serif">Z</text>
    </svg>

    <button class="absolute left-[-1px] top-[225px] flex h-[33px] w-[7px] flex-col items-center justify-evenly border-y border-r border-[#2a2c31] bg-[#e3e6eb]" aria-label="Collapse panel">
      <svg class="h-1 w-[3px]" viewBox="0 0 3 4"><path d="M3 0v4L0 2z"/></svg><svg class="h-1 w-[3px]" viewBox="0 0 3 4"><path d="M3 0v4L0 2z"/></svg><svg class="h-1 w-[3px]" viewBox="0 0 3 4"><path d="M3 0v4L0 2z"/></svg>
    </button>

    <!-- heads-up view toolbar -->
    <div class="absolute right-[29px] top-1 flex items-center text-[#888]" role="toolbar" aria-label="View toolbar">
      <button class="grid w-[19px] place-items-center" aria-label="Zoom to fit"><svg class="size-3.5"><use href="#zoomfit"/></svg></button>
      <button class="grid w-[19px] place-items-center" aria-label="Zoom to area"><svg class="size-3.5"><use href="#zoomarea"/></svg></button>
      <button class="grid w-[19px] place-items-center" aria-label="Previous view"><svg class="size-3.5"><use href="#prev"/></svg></button>
      <button class="grid w-[19px] place-items-center" aria-label="Section view"><svg class="size-3.5"><use href="#section"/></svg></button>
      <button class="grid w-[19px] place-items-center" aria-label="Dynamic annotation views"><svg class="size-3.5"><use href="#orient"/></svg></button>
      <button class="grid w-[19px] place-items-center" aria-label="View orientation"><svg class="size-3.5"><use href="#viewcube"/></svg></button>
      <button class="grid w-[11px] place-items-center" aria-label="Orientation options"><svg class="h-[3px] w-[5px]"><use href="#arrow"/></svg></button>
      <button class="grid w-[19px] place-items-center" aria-label="Display style"><svg class="size-3.5"><use href="#display"/></svg></button>
      <button class="grid w-[11px] place-items-center" aria-label="Display options"><svg class="h-[3px] w-[5px]"><use href="#arrow"/></svg></button>
      <button class="grid w-[19px] place-items-center" aria-label="Hide or show items"><svg class="size-3.5"><use href="#glasses"/></svg></button>
      <button class="grid w-[11px] place-items-center" aria-label="Visibility options"><svg class="h-[3px] w-[5px]"><use href="#arrow"/></svg></button>
      <button class="grid w-[19px] place-items-center" aria-label="Edit appearance"><svg class="size-3.5"><use href="#ball"/></svg></button>
      <button class="grid w-[19px] place-items-center" aria-label="Apply scene"><svg class="size-3.5"><use href="#scene"/></svg></button>
      <button class="grid w-[11px] place-items-center" aria-label="Scene options"><svg class="h-[3px] w-[5px]"><use href="#arrow"/></svg></button>
      <button class="grid w-[19px] place-items-center" aria-label="View settings"><svg class="size-3.5"><use href="#monitor"/></svg></button>
      <button class="grid w-[11px] place-items-center" aria-label="View settings options"><svg class="h-[3px] w-[5px]"><use href="#arrow"/></svg></button>
    </div>
  </section>
</main>

<!-- document tabs -->
<footer class="flex h-[7px] shrink-0 items-start overflow-hidden border-t border-[#33363c] bg-[#dfe2e7]">
  <div class="flex bg-[#a8a9ab] pl-0.5 text-[#85888d]">
    <button class="grid h-[11px] w-[13px] place-items-center border border-[#8b8e93]" aria-label="First tab"><svg class="size-2" viewBox="0 0 8 8"><path d="M1 0h1v8H1zM7 0v8L3 4z" fill="currentColor"/></svg></button>
    <button class="grid h-[11px] w-[13px] place-items-center border border-[#8b8e93]" aria-label="Previous tab"><svg class="size-2" viewBox="0 0 8 8"><path d="M6 0v8L2 4z" fill="currentColor"/></svg></button>
    <button class="grid h-[11px] w-[13px] place-items-center border border-[#8b8e93]" aria-label="Next tab"><svg class="size-2" viewBox="0 0 8 8"><path d="M2 0v8l4-4z" fill="currentColor"/></svg></button>
    <button class="grid h-[11px] w-[13px] place-items-center border border-[#8b8e93]" aria-label="Last tab"><svg class="size-2" viewBox="0 0 8 8"><path d="M6 0h1v8H6zM1 0v8l4-4z" fill="currentColor"/></svg></button>
  </div>
  <button class="h-[11px] w-[48px] border-l-2 border-[#222] bg-[#dfe2e7] font-bold">Model</button>
  <button class="h-[11px] w-[55px] border-l-2 border-[#222] bg-[#a8a9ab]">3D Views</button>
  <button class="h-[11px] w-[87px] border-x-2 border-[#222] bg-[#a8a9ab]">Motion Study 1</button>
</footer>
</body>
</html>
